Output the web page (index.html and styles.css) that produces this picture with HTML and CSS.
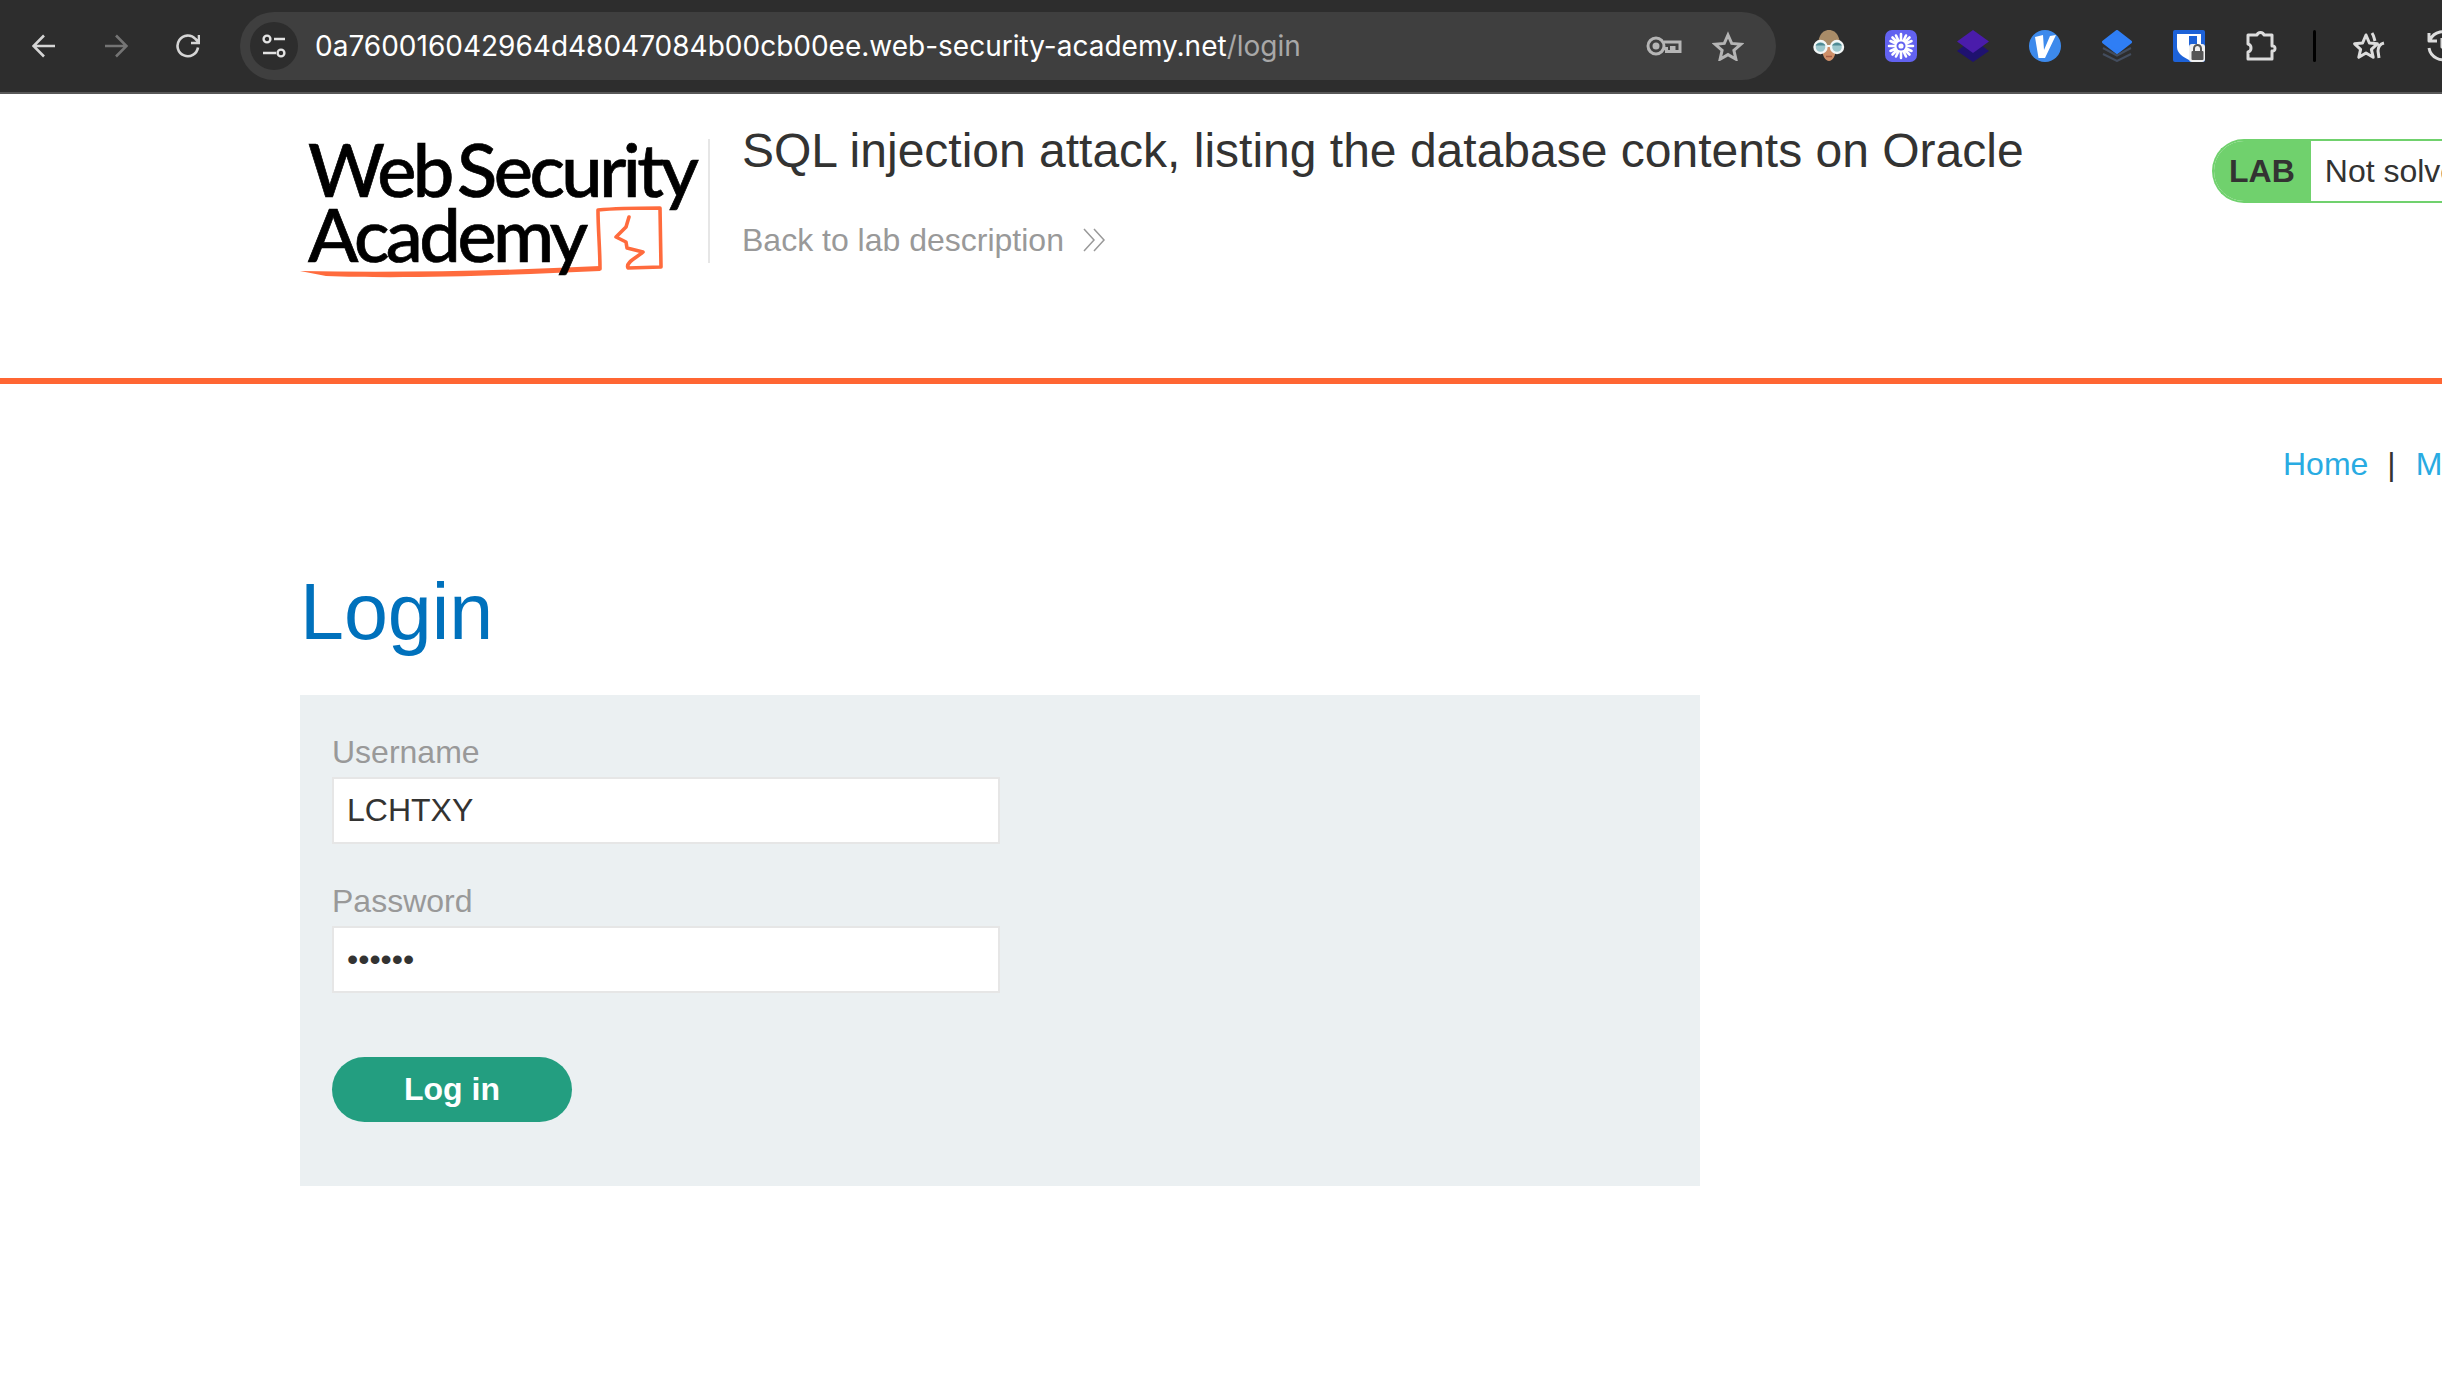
FILE: index.html
```html
<!DOCTYPE html>
<html lang="en">
<head>
<meta charset="utf-8">
<title>Login</title>
<link rel="stylesheet" href="styles.css">
</head>
<body>
<div class="toolbar">
  <div class="nav">
    <svg class="nav-icon" viewBox="0 0 24 24"><path d="M23 12H2M12 1.500L1.500 12 12 22.500"/></svg>
    <svg class="nav-icon dim" viewBox="0 0 24 24"><path d="M1 12h21M12 1.500L22.500 12 12 22.500"/></svg>
    <svg class="nav-icon" viewBox="0 0 24 24"><path d="M22 13.500A10.300 10.300 0 1 1 19.500 5L23 8.500M23 1v8h-8"/></svg>
  </div>
  <div class="omnibox">
    <div class="chip">
      <svg viewBox="0 0 26 26"><circle cx="6" cy="6" r="3.400"/><path d="M13 6h11M2 20h13"/><circle cx="20" cy="20" r="3.400"/></svg>
    </div>
    <div class="url">0a760016042964d48047084b00cb00ee.web-security-academy.net<span class="url-path">/login</span></div>
    <svg class="key" viewBox="0 0 36 20"><circle cx="10" cy="10" r="8"/><circle class="key-core" cx="10" cy="10" r="3.500"/><path d="M18 6h16v9.500h-6v-4h-2.500v4H20.500v-3H18"/></svg>
    <svg class="star" viewBox="0 0 32 30"><path d="M16 4l3.700 8.400 9.100.9-6.900 6 2 8.900L16 23.600l-7.900 4.600 2-8.900-6.900-6 9.100-.9z"/></svg>
  </div>
  <div class="extensions">
    <svg class="ext" viewBox="0 0 32 32"><path d="M6 22C3 9 8 0 16 0s13 9 10 22z" fill="#a98c68"/><path d="M9 17c0 9 3.500 14 7 14s7-5 7-14c-4-3-10-3-14 0z" fill="#cf9069"/><path d="M13 26.500h6" stroke="#a85f45" stroke-width="1.500"/><circle cx="7.500" cy="17" r="6" fill="#9cc7cc" stroke="#f2f6f6" stroke-width="2.400"/><circle cx="24" cy="17" r="6" fill="#9cc7cc" stroke="#f2f6f6" stroke-width="2.400"/><path d="M2.500 15.500a6 6 0 0 1 10 0zM19 15.500a6 6 0 0 1 10 0z" fill="#4f8a94"/><path d="M13 16h6" stroke="#f2f6f6" stroke-width="2"/></svg>
    <svg class="ext" viewBox="0 0 32 32"><rect width="32" height="32" rx="7" fill="#6262f0"/><g stroke="#fff" stroke-width="2.600" stroke-linecap="round"><path d="M16 4v24M4 16h24M7.500 7.500l17 17M24.500 7.500l-17 17M11 5.500l10 21M21 5.500l-10 21M5.500 11l21 10M26.500 11l-21 10"/></g><circle cx="16" cy="16" r="4.500" fill="#6262f0"/><circle cx="16" cy="16" r="2.600" fill="#fff"/></svg>
    <svg class="ext" viewBox="0 0 32 32"><path d="M16 9L32 21 16 32 0 21z" fill="#1f1270"/><path d="M16 0L32 11.500 16 23 0 11.500z" fill="#4a1cab"/></svg>
    <svg class="ext" viewBox="0 0 32 32"><circle cx="16" cy="16" r="16" fill="#3d8aec"/><path d="M6 7l8-2 1 15L21 6l6-1-11 23H9.500z" fill="#fff"/></svg>
    <svg class="ext" viewBox="0 0 32 32"><path d="M16 1.500L29.500 12 16 22.500 2.500 12z" fill="#2f7ef5" stroke="#2f7ef5" stroke-width="3" stroke-linejoin="round"/><path d="M2 18l14 7.500L30 18M2 24l14 7L30 24" fill="none" stroke="#434d5e" stroke-width="2"/></svg>
    <svg class="ext" viewBox="0 0 32 32"><rect width="32" height="32" rx="2" fill="#1d62d8"/><path d="M4 4h24v13c0 6-6 10-12 13C10 27 4 23 4 17z" fill="#fff"/><path d="M16 6h8v11c0 4-4 7-8 9z" fill="#1d62d8"/><rect x="16" y="14" width="16" height="18" rx="3" fill="#f0f0f0"/><rect x="18.500" y="21" width="12" height="9" rx="1" fill="#555"/><path d="M21 21v-2.500a3.500 3.500 0 0 1 7 0V21" fill="none" stroke="#555" stroke-width="2"/></svg>
    <svg class="ext line" viewBox="0 0 32 32"><path d="M3 5h9c1-3.500 6-3.500 7 0h8v11c4-1 4 6 0 5v8H3v-7c4-1 4-7 0-8z"/></svg>
    <span class="sep"></span>
    <svg class="ext line wide" viewBox="0 0 34 30"><path d="M14 4l3.400 8 8 .8-6 5.500 1.800 8L14 22l-7.200 4.300 1.800-8-6-5.500 8-.8zM20 2c2 3 2 5 3 8M32 12c-4 1-6 4-6 8l1 7"/></svg>
    <svg class="ext line" viewBox="0 0 32 32"><path d="M4 10a14 14 0 1 1-1 8M3 3v8h8M16 8v9l6 4"/></svg>
  </div>
</div>
<div class="page">
  <header class="lab-header">
    <div class="logo">
      <svg class="logo-mark" viewBox="0 0 372 80"><path d="M4 71C100 73 200 71 304 66L304 71C200 76 100 79 30 76z" fill="#ff6b3d"/><path d="M304 69c0-20-2-40-2-59 20-2 45-2 62-2l1 59-33 1c-3-6 10-11 15-16l-16-4-1-6-10-5 10-10 3-10" fill="none" stroke="#ff6b3d" stroke-width="3.600" stroke-linejoin="round" stroke-linecap="round"/></svg>
      <div class="logo-line">Web Security</div>
      <div class="logo-line">Academy</div>
    </div>
    <div class="title-block">
      <h2 class="lab-title">SQL injection attack, listing the database contents on Oracle</h2>
      <a class="back-link">Back to lab description
        <svg class="chev" viewBox="0 0 24 26"><path d="M2 2l10 11L2 24M12 2l10 11-10 11"/></svg>
      </a>
    </div>
    <div class="status">
      <span class="status-tag">LAB</span>
      <span class="status-text">Not solved</span>
    </div>
  </header>
  <nav class="top-links">
    <a>Home</a><span class="bar">|</span><a>My account</a>
  </nav>
  <main class="content">
    <h1 class="heading">Login</h1>
    <form class="panel">
      <label class="field-label">Username</label>
      <input class="field" type="text" value="LCHTXY">
      <label class="field-label">Password</label>
      <input class="field" type="password" value="peter1">
      <button class="submit" type="button">Log in</button>
    </form>
  </main>
</div>
</body>
</html>
```
FILE: styles.css
```css
* { box-sizing: border-box; }
html, body { margin: 0; padding: 0; height: 100%; overflow: hidden; background: #fff; }
body { font-family: "Liberation Sans", Arial, sans-serif; color: #333332; width: 2442px; }

.toolbar { height: 94px; background: #2d2d2d; border-bottom: 2px solid #585858; display: flex; align-items: flex-start; padding-top: 12px; overflow: hidden; }
.nav { display: flex; gap: 48px; width: 240px; padding: 22px 0 0 32px; flex: none; }
.nav-icon { width: 24px; height: 24px; fill: none; stroke: #d5d5d5; stroke-width: 2.600; }
.nav-icon.dim { stroke: #747474; }
.omnibox { width: 1536px; height: 68px; flex: none; background: #3f3f3f; border-radius: 34px; display: flex; align-items: center; padding-left: 10px; }
.chip { width: 48px; height: 48px; border-radius: 50%; background: #2d2d2d; display: flex; align-items: center; justify-content: center; flex: none; }
.chip svg { width: 26px; height: 26px; fill: none; stroke: #e3e3e3; stroke-width: 2.400; }
.url { margin-left: 17px; font-family: Inter, sans-serif; font-size: 28px; color: #fff; white-space: nowrap; width: 1332px; flex: none; }
.url-path { color: #a8a8a8; }
.key { width: 36px; height: 20px; fill: none; stroke: #b5b5b5; stroke-width: 3; flex: none; margin-left: -1px; }
.key-core { fill: #b5b5b5; stroke: none; }
.star { width: 32px; height: 30px; fill: none; stroke: #b5b5b5; stroke-width: 3; flex: none; margin-left: 30px; }
.extensions { display: flex; align-items: center; gap: 40px; padding: 18px 0 0 37px; flex: none; }
.ext { width: 32px; height: 32px; flex: none; }
.ext.line { fill: none; stroke: #dcdcdc; stroke-width: 3; stroke-linejoin: round; }
.ext.wide { width: 34px; height: 30px; }
.sep { width: 3px; height: 32px; background: #000; border-radius: 2px; flex: none; margin: 0 -4px; }

.lab-header { display: flex; height: 290px; border-bottom: 6px solid #ff6633; padding: 45px 0 0 300px; align-items: flex-start; }
.logo { width: 408px; height: 124px; flex: none; position: relative; color: #000; font-family: Lato, sans-serif; font-weight: 500; }
.logo-line { position: relative; font-size: 74px; line-height: 65px; letter-spacing: -3.500px; word-spacing: -9px; padding-left: 8px; white-space: nowrap; -webkit-text-stroke: 0.7px #000; top: -3px; }
.logo-mark { position: absolute; left: -4px; top: 61px; width: 372px; height: 80px; }
.title-block { width: 1504px; flex: none; border-left: 2px solid #e6e6e6; padding-left: 32px; height: 124px; }
.lab-title { margin: -16px 0 0; font-size: 48px; font-weight: 400; line-height: 56px; white-space: nowrap; }
.back-link { display: flex; align-items: center; gap: 18px; color: #999; font-size: 32px; line-height: 40px; margin-top: 41px; }
.chev { width: 24px; height: 26px; fill: none; stroke: #999; stroke-width: 1.500; }
.status { display: flex; height: 64px; width: 300px; flex: none; border: 2px solid #70d16d; border-right: 0; border-radius: 32px 0 0 32px; white-space: nowrap; overflow: hidden; }
.status-tag { background: #70d16d; font-weight: 700; font-size: 32px; display: flex; align-items: center; padding: 0 16px 0 15px; }
.status-text { font-size: 32px; display: flex; align-items: center; padding-left: 14px; }

.top-links { display: flex; padding: 60px 0 0 2283px; font-size: 32px; line-height: 40px; white-space: nowrap; width: 3000px; }
.top-links a { color: #29abe2; }
.bar { margin: 0 20px 0 19px; }

.content { padding: 0 0 0 300px; }
.heading { margin: 83px 0 0; font-size: 79px; font-weight: 400; line-height: 90px; color: #0071bc; }
.panel { width: 1400px; height: 491px; margin-top: 38px; background: #ebf0f2; padding: 37px 32px 0; display: flex; flex-direction: column; align-items: flex-start; }
.field-label { font-size: 32px; line-height: 40px; color: #999; margin-bottom: 5px; }
.field { width: 668px; height: 67px; border: 2px solid #e6e6e6; background: #fff; font: 32px "Liberation Sans", Arial, sans-serif; color: #333332; padding: 0 13px; margin-bottom: 37px; outline: none; }
.submit { margin-top: 27px; width: 240px; height: 65px; border: 0; border-radius: 33px; background: #239e80; color: #fff; font: 700 32px "Liberation Sans", Arial, sans-serif; padding: 0; }
```
